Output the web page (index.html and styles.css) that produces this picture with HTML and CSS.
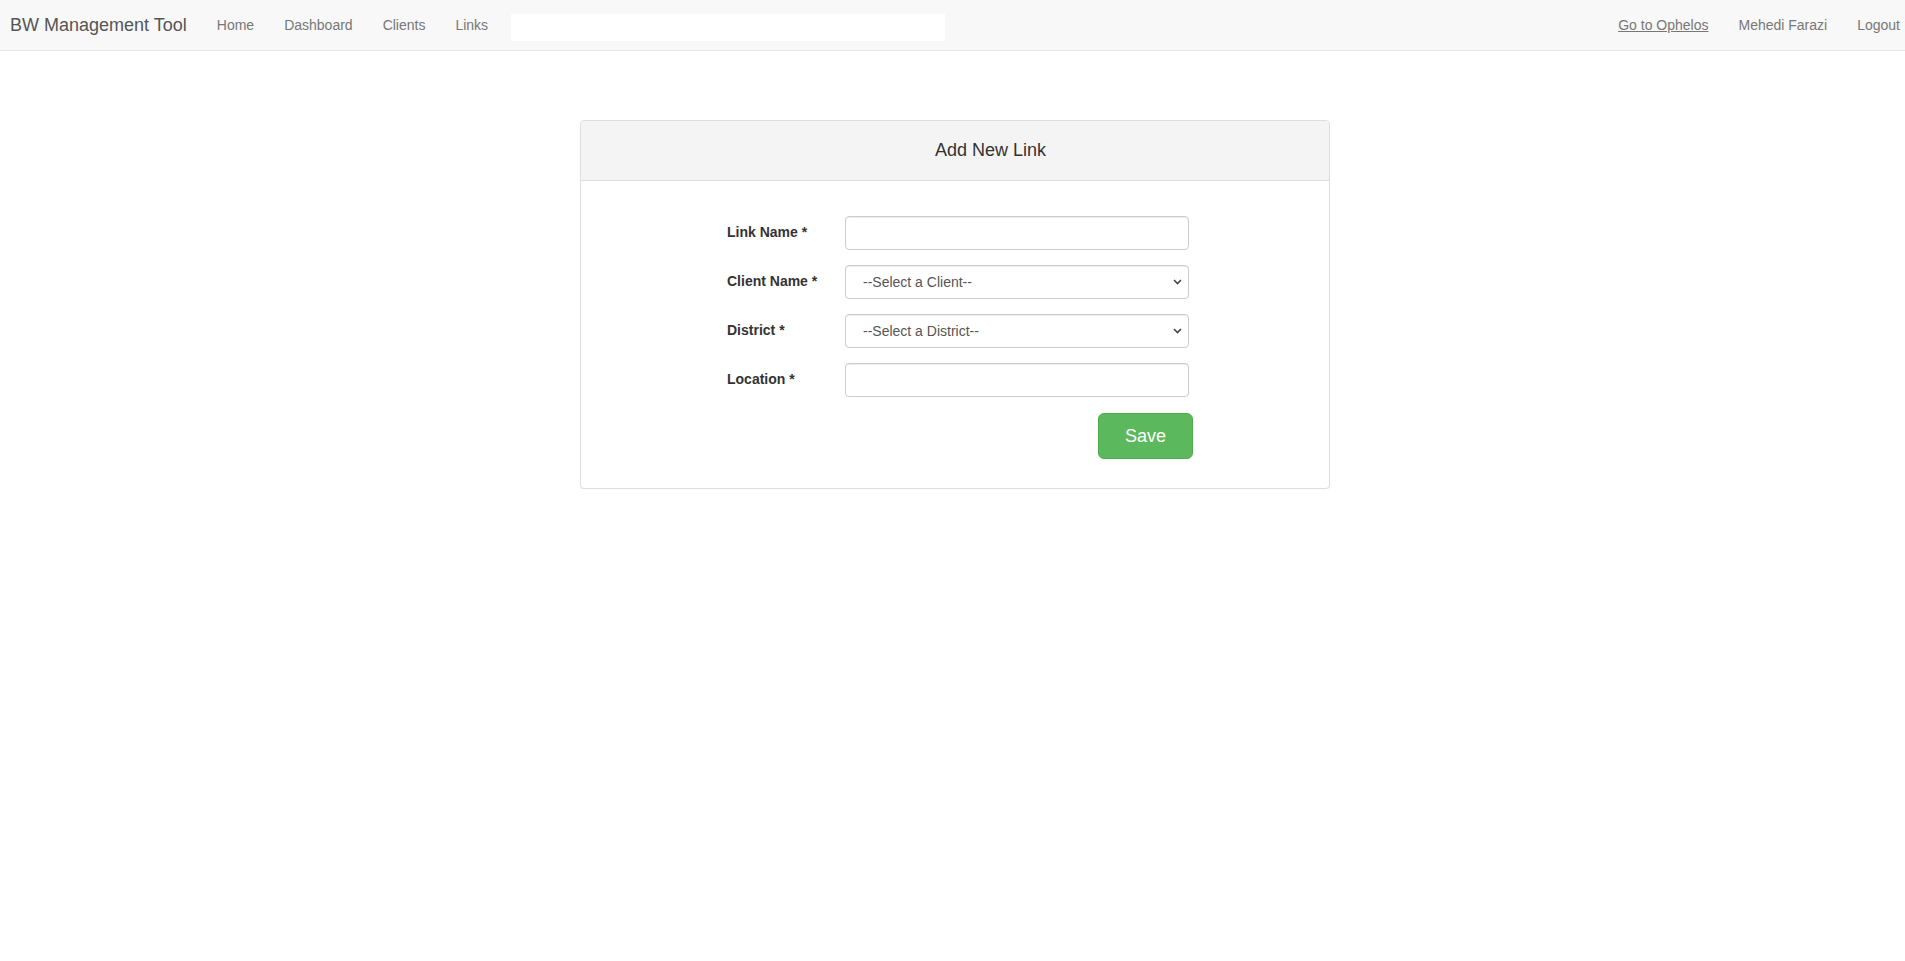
FILE: index.html
```html
<!DOCTYPE html>
<html>
<head>
  <meta charset="utf-8">
  <title>Add New Link - BW Management Tool</title>
  <link rel="stylesheet" href="styles.css">
</head>
<body>
  <!-- Top navigation -->
  <nav class="navbar">
    <a class="navbar-brand" href="#">BW Management Tool</a>
    <ul class="nav">
      <li><a href="#">Home</a></li>
      <li><a href="#">Dashboard</a></li>
      <li><a href="#">Clients</a></li>
      <li><a href="#">Links</a></li>
    </ul>
    <div class="nav-search"></div>
    <ul class="nav nav-right">
      <li><a href="#" class="underline">Go to Ophelos</a></li>
      <li><a href="#">Mehedi Farazi</a></li>
      <li><a href="#">Logout</a></li>
    </ul>
  </nav>

  <div class="main">
    <div class="panel">
      <div class="panel-heading">Add New Link</div>
      <div class="panel-body">
        <form class="link-form">
          <label class="control-label" for="link-name">Link Name <span class="req">*</span></label>
          <input class="form-control" id="link-name" type="text">

          <label class="control-label" for="client-name">Client Name <span class="req">*</span></label>
          <select class="form-control" id="client-name">
            <option>--Select a Client--</option>
          </select>

          <label class="control-label" for="district">District <span class="req">*</span></label>
          <select class="form-control" id="district">
            <option>--Select a District--</option>
          </select>

          <label class="control-label" for="location">Location <span class="req">*</span></label>
          <input class="form-control" id="location" type="text">

          <div class="form-actions">
            <button type="button" class="btn btn-success">Save</button>
          </div>
        </form>
      </div>
    </div>
  </div>
</body>
</html>
```

FILE: styles.css
```css
body {
  margin: 0;
  font-family: "Liberation Sans", Arial, sans-serif;
  font-size: 14px;
  line-height: 1.42857;
  color: #333;
  background: #fff;
}

a {
  text-decoration: none;
}

/* navbar */
.navbar {
  display: flex;
  align-items: center;
  height: 50px;
  background: #f8f8f8;
  border-bottom: 1px solid #e7e7e7;
}

.navbar-brand {
  padding: 0 15px 0 10px;
  font-size: 18px;
  line-height: 50px;
  color: #555;
}

.nav {
  display: flex;
  margin: 0;
  padding: 0;
  list-style: none;
}

.nav li a {
  display: block;
  padding: 0 15px;
  line-height: 50px;
  color: #777;
}

.nav li a.underline {
  text-decoration: underline;
}

.nav-search {
  width: 434px;
  height: 27px;
  margin: 5px 0 0 8px;
  background: #fff;
}

.nav-right {
  margin-left: auto;
  margin-right: -10px;
}

/* panel */
.main {
  display: flex;
  justify-content: center;
  padding: 69px 0 0 5px;
}

.panel {
  width: 748px;
  border: 1px solid #ddd;
  border-radius: 4px;
  background: #fff;
  box-shadow: 0 1px 1px rgba(0, 0, 0, 0.05);
}

.panel-heading {
  height: 59px;
  padding-left: 71px;
  border-bottom: 1px solid #ddd;
  border-radius: 3px 3px 0 0;
  background: #f4f4f4;
  font-size: 18px;
  line-height: 59px;
  text-align: center;
  color: #333;
}

.panel-body {
  padding: 35px 0 29px;
}

/* form */
.link-form {
  display: grid;
  grid-template-columns: 118px 344px;
  row-gap: 15px;
  align-items: center;
  margin-left: 146px;
}

.control-label {
  font-weight: bold;
  color: #333;
}

.req {
  color: #333;
}

.form-control {
  box-sizing: border-box;
  width: 100%;
  height: 34px;
  margin: 0;
  padding: 6px 12px;
  border: 1px solid #ccc;
  border-radius: 4px;
  background: #fff;
  box-shadow: inset 0 1px 1px rgba(0, 0, 0, 0.075);
  font-family: inherit;
  font-size: 14px;
  color: #555;
}

select.form-control {
  appearance: none;
  -webkit-appearance: none;
  padding-left: 17px;
  background-image: url("data:image/svg+xml;utf8,<svg xmlns='http://www.w3.org/2000/svg' width='9' height='6' viewBox='0 0 9 6'><path d='M1 1l3.5 3.5L8 1' fill='none' stroke='%23444' stroke-width='1.6'/></svg>");
  background-repeat: no-repeat;
  background-position: right 6px center;
}

.form-actions {
  grid-column: 2;
  display: flex;
  justify-content: flex-end;
  margin-right: -4px;
  padding-top: 1px;
}

.btn {
  padding: 10px 26px;
  border: 1px solid transparent;
  border-radius: 6px;
  font-family: inherit;
  font-size: 18px;
  line-height: 24px;
  cursor: pointer;
}

.btn-success {
  background: #5cb85c;
  border-color: #4cae4c;
  color: #fff;
}
```
